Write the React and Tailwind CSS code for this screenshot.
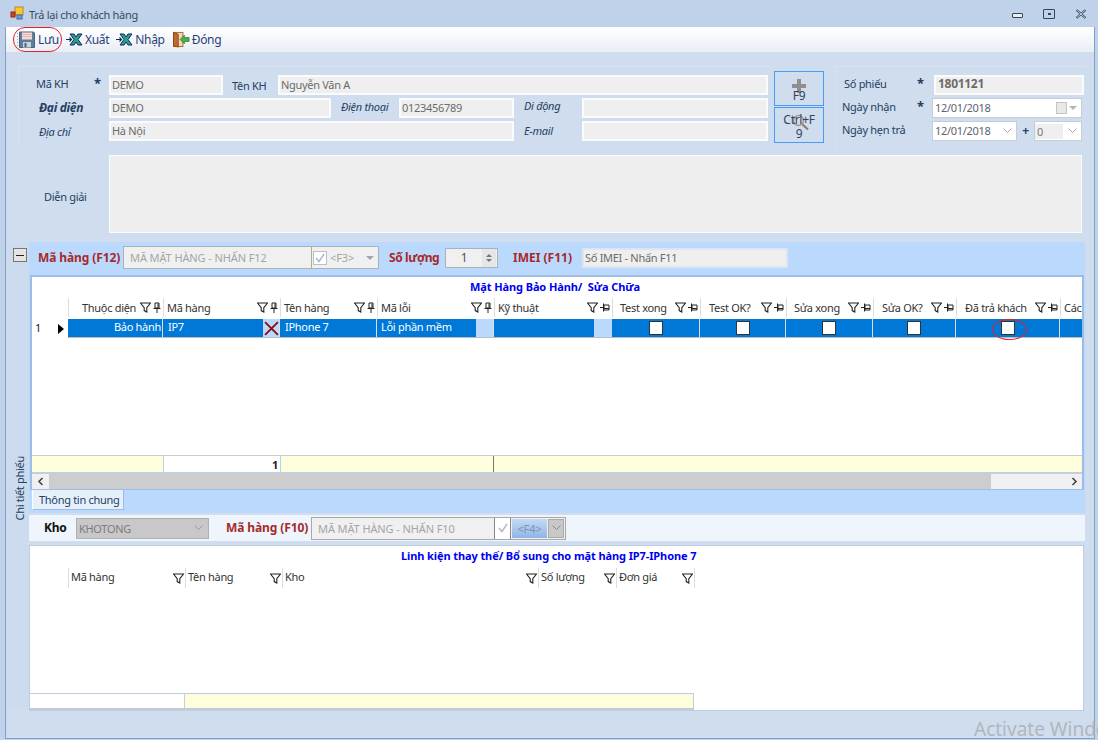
import React from "react";

const Filter = () => (
  <svg width="11" height="11" viewBox="0 0 11 11" className="shrink-0">
    <path d="M0.5 1h10L6.8 5.6v4.4L4.2 8.6V5.6z" fill="#fff" stroke="#222" strokeWidth="1.1" />
  </svg>
);

const PinV = () => (
  <svg width="8" height="11" viewBox="0 0 8 11" className="shrink-0">
    <path d="M2 1h4v5H2zM0.5 6.5h7M4 7v4M5 1.5v4" fill="none" stroke="#222" strokeWidth="1" />
  </svg>
);

const PinH = () => (
  <svg width="10" height="9" viewBox="0 0 10 9" className="shrink-0">
    <path d="M0 4.5h3M3.5 0.5v8M4 2h5v5H4zM4 5.5h5" fill="none" stroke="#222" strokeWidth="1" />
  </svg>
);

const WindowIcon = () => (
  <svg width="15" height="15" viewBox="0 0 15 15">
    <rect x="5" y="1" width="8" height="8" fill="#f5c834" stroke="#b88a20" />
    <rect x="1" y="6" width="4" height="5" fill="#d8402c" stroke="#8e2216" />
    <rect x="7" y="9" width="5" height="4" fill="#6b9ddc" stroke="#3d6aa8" />
  </svg>
);

const Floppy = () => (
  <svg width="16" height="17" viewBox="0 0 16 17">
    <path d="M0.5 1h14l1 1v14.500H0.500z" fill="#5f7d99" stroke="#4a647d" />
    <rect x="3" y="1.500" width="10" height="7" fill="#f3dcd8" />
    <path d="M3 3.500h10M3 5.500h10" stroke="#eeb5ad" />
    <rect x="4" y="11" width="8" height="5.500" fill="#c9d3dc" />
    <rect x="5.500" y="12" width="2" height="4" fill="#4a647d" />
  </svg>
);

const ExcelX = () => (
  <svg width="17" height="13" viewBox="0 0 17 13">
    <path d="M4 1h4l2 3 2-3h4l-4 5.500L16 12h-4l-2-3-2 3H4l4-5.500z" fill="#2f9c8f" stroke="#0c2f5a" strokeWidth="1" />
    <path d="M0 6.500h5M3.500 4.500l2 2-2 2" fill="none" stroke="#0c2f5a" strokeWidth="1.200" />
  </svg>
);

const Door = () => (
  <svg width="17" height="17" viewBox="0 0 18 17">
    <rect x="0.500" y="1" width="10" height="15" fill="#f0d9b8" stroke="#a8662a" />
    <path d="M0.500 1l5 2v13.500l-5-1.500z" fill="#c2692a" stroke="#8a4516" />
    <path d="M17 6.500h-5V4L7.500 8.500 12 13v-2.500h5z" fill="#4cb04a" stroke="#2c7a2c" strokeWidth="0.800" />
  </svg>
);

const Lookup = () => (
  <svg width="17" height="17" viewBox="0 0 17 17">
    <circle cx="6.500" cy="6.500" r="5" fill="#d9dfe6" stroke="#9a9a9a" strokeWidth="1.600" />
    <path d="M10.500 10.500l5.500 5" stroke="#8a7a68" strokeWidth="2" />
  </svg>
);

const Chevron = ({ color = "#a8a8a8" }) => (
  <svg width="9" height="6" viewBox="0 0 9 6">
    <path d="M0.500 0.500l4 4 4-4" fill="none" stroke={color} />
  </svg>
);

const Tick = ({ color = "#a9b8cc" }) => (
  <svg width="12" height="12" viewBox="0 0 12 12">
    <path d="M2 6l3 3.500L10 2" fill="none" stroke={color} strokeWidth="1.400" />
  </svg>
);

const Box = ({ className = "", children }) => (
  <div className={`h-full shrink-0 bg-[#efefef] border-2 border-[#fafbfd] text-[#6b6b6b] pl-[1px] pb-[2px] flex items-center ${className}`}>
    {children}
  </div>
);

const Row = ({ children }) => <div className="flex items-center h-[20px]">{children}</div>;

const Label = ({ className = "", children }) => (
  <div className={`shrink-0 text-[#24405f] ${className}`}>{children}</div>
);

const UPPER_COLS = [
  { name: "Thuộc diện", w: "w-[95px]", pl: "pl-[13px]", pin: "v" },
  { name: "Mã hàng", w: "w-[117px]", pl: "pl-[3px]", pin: "v" },
  { name: "Tên hàng", w: "w-[97px]", pl: "pl-[3px]", pin: "v" },
  { name: "Mã lỗi", w: "w-[117px]", pl: "pl-[3px]", pin: "v" },
  { name: "Kỹ thuật", w: "w-[118px]", pl: "pl-[3px]", pin: "h" },
  { name: "Test xong", w: "w-[88px]", pl: "pl-[7px]", pin: "h" },
  { name: "Test OK?", w: "w-[86px]", pl: "pl-[8px]", pin: "h" },
  { name: "Sửa xong", w: "w-[87px]", pl: "pl-[7px]", pin: "h" },
  { name: "Sửa OK?", w: "w-[83px]", pl: "pl-[8px]", pin: "h" },
  { name: "Đã trả khách", w: "w-[104px]", pl: "pl-[8px]", pin: "h" },
];

const LOWER_COLS = [
  { name: "Mã hàng", w: "w-[117px]" },
  { name: "Tên hàng", w: "w-[97px]" },
  { name: "Kho", w: "w-[256px]" },
  { name: "Số lượng", w: "w-[78px]" },
  { name: "Đơn giá", w: "w-[78px]" },
];

const CHECK_COLS = ["w-[88px]", "w-[86px]", "w-[87px]", "w-[83px]", "w-[104px]"];

function Check({ w }) {
  return (
    <div className={`${w} shrink-0 h-full border-r border-[#d8dfe8] flex items-center justify-center`}>
      <div className="w-[14px] h-[14px] bg-white border border-[#333]" />
    </div>
  );
}

export default function App() {
  return (
    <div className="relative w-[1098px] h-[740px] overflow-hidden bg-[#bfd2e9] font-['Noto_Sans','Liberation_Sans',sans-serif] text-[11px] tracking-[-0.3px] leading-none text-[#33445a]">
      {/* title bar */}
      <div className="h-[27px] flex items-center pl-[10px]">
        <WindowIcon />
        <span className="ml-[4px] mt-[2px] text-[#3a4a5e] text-[11px]">Trả lại cho khách hàng</span>
        <div className="ml-auto flex items-center gap-[20px] pr-[11px]">
          <div className="w-[11px] h-[5px] border border-[#33445a] rounded-[1px] bg-[#e9eff7] mt-[4px]" />
          <div className="w-[12px] h-[10px] border-[1.5px] border-[#33445a] rounded-[1px] flex items-center justify-center">
            <div className="w-[3px] h-[2px] bg-[#33445a]" />
          </div>
          <svg width="12" height="10" viewBox="0 0 12 10">
            <path d="M1.500 1l9 8M10.500 1l-9 8" stroke="#33445a" strokeWidth="2.200" />
            <path d="M1.500 1l9 8M10.500 1l-9 8" stroke="#e9eff7" strokeWidth="0.800" />
          </svg>
        </div>
      </div>

      {/* client area */}
      <div className="ml-[5px] w-[1090px] h-[712px] bg-[#d0ddef] border-x border-b border-[#7f9fc6]">
        {/* toolbar */}
        <div className="h-[25px] bg-gradient-to-b from-white to-[#e9eef5] flex items-center pl-[11px] text-[12px] text-[#2c3f78]">
          <div className="flex flex-col gap-[2px] mr-[1px]">
            <i className="w-[1px] h-[1px] bg-[#9fb2c9]" />
            <i className="w-[1px] h-[1px] bg-[#9fb2c9]" />
            <i className="w-[1px] h-[1px] bg-[#9fb2c9]" />
            <i className="w-[1px] h-[1px] bg-[#9fb2c9]" />
            <i className="w-[1px] h-[1px] bg-[#9fb2c9]" />
          </div>
          <Floppy />
          <span className="ml-[3px] mr-[7px]">Lưu</span>
          <ExcelX />
          <span className="ml-[2px] mr-[7px]">Xuất</span>
          <ExcelX />
          <span className="ml-[2px] mr-[8px]">Nhập</span>
          <Door />
          <span className="ml-[2px]">Đóng</span>
        </div>

        {/* header form */}
        <div className="h-[96px] flex pt-[14px]">
          <div className="ml-[12px] w-[752px] h-[82px] border-t border-l border-[#d8e3f1] pt-[8px] flex flex-col gap-[3px]">
            <Row>
              <Label className="ml-[17px] w-[58px] mb-[4px]">Mã KH</Label>
              <Label className="w-[15px] text-[13px] font-bold mb-[4px]">*</Label>
              <Box className="w-[114px]">DEMO</Box>
              <Label className="ml-[9px] w-[46px]">Tên KH</Label>
              <Box className="w-[490px]">Nguyễn Văn A</Box>
            </Row>
            <Row>
              <Label className="ml-[20px] w-[70px] font-bold italic text-[12px]">Đại diện</Label>
              <Box className="w-[222px]">DEMO</Box>
              <Label className="ml-[10px] w-[58px] italic mb-[4px]">Điện thoại</Label>
              <Box className="w-[115px]">0123456789</Box>
              <Label className="ml-[10px] w-[58px] italic mb-[5px]">Di động</Label>
              <Box className="w-[186px]" />
            </Row>
            <Row>
              <Label className="ml-[20px] w-[70px] italic">Địa chỉ</Label>
              <Box className="w-[405px]">Hà Nội</Box>
              <Label className="ml-[10px] w-[58px] italic mb-[2px]">E-mail</Label>
              <Box className="w-[186px]" />
            </Row>
          </div>

          <div className="ml-[4px] mt-[5px] flex flex-col gap-[1px]">
            <div className="relative w-[50px] h-[35px] border-[1.5px] border-[#4a9bf5] flex flex-col items-center justify-end pb-[3px]">
              <svg width="14" height="14" viewBox="0 0 14 14" className="mb-[-3px]">
                <path d="M5 0h4v5h5v4H9v5H5V9H0V5h5z" fill="#8f8f8f" />
              </svg>
              <span className="text-[#33445a] text-[12px]">F9</span>
            </div>
            <div className="relative w-[50px] h-[36px] border-[1.5px] border-[#4a9bf5] flex flex-col items-center justify-center gap-[2px] pt-[3px] text-[12px]">
              <div className="absolute left-[17px] top-[6px]">
                <Lookup />
              </div>
              <span className="relative">Ctrl+F</span>
              <span className="relative">9</span>
            </div>
          </div>

          <div className="ml-[11px] w-[252px] h-[82px] border-t border-l border-[#d8e3f1] pt-[8px] flex flex-col gap-[3px]">
            <Row>
              <Label className="ml-[8px] w-[73px] mb-[4px]">Số phiếu</Label>
              <Label className="w-[17px] text-[13px] font-bold mb-[4px]">*</Label>
              <Box className="w-[150px] font-bold text-[12px] pl-[2px]">1801121</Box>
            </Row>
            <Row>
              <Label className="ml-[6px] w-[75px] mb-[4px]">Ngày nhận</Label>
              <Label className="w-[15px] text-[13px] font-bold mb-[4px]">*</Label>
              <div className="w-[150px] h-full bg-white border border-[#c5cdd8] flex items-center pl-[2px] pb-[1px] text-[#5c6470]">
                12/01/2018
                <div className="ml-auto mr-[4px] flex items-center gap-[2px]">
                  <div className="w-[11px] h-[12px] bg-[#e8e8e8] border border-[#c4c4c4]" />
                  <div className="w-0 h-0 border-x-[4px] border-x-transparent border-t-[4px] border-t-[#b5b5b5]" />
                </div>
              </div>
            </Row>
            <Row>
              <Label className="ml-[6px] w-[90px] mb-[4px]">Ngày hẹn trả</Label>
              <div className="w-[85px] h-full bg-white border border-[#c5cdd8] flex items-center pl-[2px] pb-[1px] text-[#5c6470]">
                12/01/2018
                <div className="ml-auto mr-[4px]">
                  <Chevron />
                </div>
              </div>
              <Label className="w-[17px] text-center font-bold text-[12px]">+</Label>
              <div className="w-[48px] h-full bg-white border border-[#c5cdd8] flex items-center text-[#7a7a7a]">
                <div className="w-[28px] h-[15px] bg-[#efefef] pl-[2px] flex items-center">0</div>
                <div className="ml-auto mr-[4px]">
                  <Chevron />
                </div>
              </div>
            </Row>
          </div>
        </div>

        {/* dien giai */}
        <div className="h-[94px] flex pt-[7px]">
          <div className="w-[103px] shrink-0 flex items-center h-[78px] pl-[38px] pt-[4px] text-[#24405f]">Diễn giải</div>
          <div className="w-[973px] h-[78px] bg-[#eeeeee] border border-[#fafbfd]" />
        </div>

        {/* detail section */}
        <div className="flex h-[468px]">
          <div className="w-[23px] shrink-0 bg-[#ccdbee] flex flex-col items-center pt-[6px] pb-[190px] pl-[4px]">
            <div className="w-[14px] h-[14px] border border-[#777] bg-[#e5e5e5] flex items-center justify-center">
              <div className="w-[8px] h-[1px] bg-[#222]" />
            </div>
            <div className="mt-auto [writing-mode:vertical-rl] rotate-180 text-[#24405f] whitespace-nowrap">Chi tiết phiếu</div>
          </div>

          <div className="w-[1056px] shrink-0">
            <div className="h-[271px] bg-[#bbd9fd]">
              {/* upper filter */}
              <div className="h-[33px] flex items-center pb-[2px] text-[12px]">
                <span className="ml-[9px] w-[85px] font-bold text-[#a52a2a] tracking-[-0.1px]">Mã hàng (F12)</span>
                <div className="w-[256px] h-[23px] bg-[#f0f0f0] border border-[#a9b2bc] flex items-center text-[#a5a5a5] text-[11px] tracking-[-0.1px]">
                  <span className="pl-[6px] w-[187px] shrink-0">MÃ MẶT HÀNG - NHẤN F12</span>
                  <div className="w-[16px] h-[21px] border-l border-[#b9a97e] flex items-center justify-center">
                    <div className="w-[14px] h-[14px] bg-white border border-[#b8c0ca] flex items-center justify-center">
                      <Tick />
                    </div>
                  </div>
                  <span className="ml-[3px]">&lt;F3&gt;</span>
                  <div className="ml-auto mr-[4px] w-0 h-0 border-x-[4px] border-x-transparent border-t-[4px] border-t-[#a5a5a5]" />
                </div>
                <span className="ml-[10px] w-[56px] font-bold text-[#a52a2a] tracking-[-0.4px]">Số lượng</span>
                <div className="w-[53px] h-[20px] bg-[#f0f0f0] border border-[#a9b2bc] flex items-center text-[#555] text-[12px]">
                  <span className="w-[36px] text-center">1</span>
                  <div className="w-[14px] h-full flex flex-col justify-center items-center gap-[2px] bg-[#e6e6e6]">
                    <div className="w-0 h-0 border-x-[3px] border-x-transparent border-b-[3px] border-b-[#777]" />
                    <div className="w-0 h-0 border-x-[3px] border-x-transparent border-t-[3px] border-t-[#777]" />
                  </div>
                </div>
                <span className="ml-[15px] w-[69px] font-bold text-[#a52a2a] tracking-[0px]">IMEI (F11)</span>
                <div className="w-[206px] h-[20px] bg-[#efefef] border-2 border-[#dde5ee] flex items-center pl-[1px] pb-[1px] text-[#6b6b6b] text-[11px]">
                  Số IMEI - Nhấn F11
                </div>
              </div>

              {/* upper grid */}
              <div className="ml-[1px] w-[1054px] h-[215px] bg-white border-x-2 border-t-2 border-b border-[#9dbde8] flex flex-col overflow-hidden">
                <div className="h-[21px] pt-[4px] pl-[438px] text-[#0000f0] font-bold whitespace-nowrap tracking-[-0.1px]">Mặt Hàng Bảo Hành/&nbsp; Sửa Chữa</div>
                <div className="h-[21px] flex items-center pb-[2px] whitespace-nowrap">
                  <div className="w-[36px] shrink-0" />
                  {UPPER_COLS.map((c) => (
                    <div key={c.name} className={`${c.w} ${c.pl} shrink-0 h-full flex items-center border-l border-[#dddddd] pr-[2px] text-[#333]`}>
                      <span>{c.name}</span>
                      <div className="ml-auto flex items-center gap-[2px]">
                        <Filter />
                        {c.pin === "v" ? <PinV /> : <PinH />}
                      </div>
                    </div>
                  ))}
                  <div className="h-full flex items-center pl-[3px] border-l border-[#dddddd] text-[#333]">Các</div>
                </div>
                <div className="h-[19px] flex items-center whitespace-nowrap shrink-0">
                  <div className="w-[36px] h-full shrink-0 flex items-center pl-[3px] pb-[2px] text-[#222] relative">
                    1
                    <div className="absolute left-[26px] top-[5px] w-0 h-0 border-y-[5px] border-y-transparent border-l-[6px] border-l-black" />
                  </div>
                  <div className="flex-1 h-full flex bg-[#0078d7] text-white border-b border-[#b9bfc6] min-w-0">
                    <div className="w-[95px] shrink-0 h-full border-r border-[#d8dfe8] flex items-center justify-end pr-[1px] pb-[3px]">Bảo hành</div>
                    <div className="w-[100px] shrink-0 h-full flex items-center pl-[5px] pb-[3px]">IP7</div>
                    <div className="w-[17px] shrink-0 h-full bg-[#bbd9fd] border-r border-[#d8dfe8] flex items-center justify-center">
                      <svg width="15" height="15" viewBox="0 0 14 14">
                        <path d="M1 1l12 12M13 1L1 13" stroke="#8a1010" strokeWidth="1.800" />
                      </svg>
                    </div>
                    <div className="w-[97px] shrink-0 h-full border-r border-[#d8dfe8] flex items-center pl-[5px] pb-[3px]">IPhone 7</div>
                    <div className="w-[99px] shrink-0 h-full flex items-center pl-[4px] pb-[3px]">Lỗi phần mềm</div>
                    <div className="w-[18px] shrink-0 h-full bg-[#bbd9fd] border-r border-[#d8dfe8]" />
                    <div className="w-[100px] shrink-0 h-full" />
                    <div className="w-[18px] shrink-0 h-full bg-[#bbd9fd]" />
                    {CHECK_COLS.map((w) => (
                      <Check key={w} w={w} />
                    ))}
                  </div>
                </div>
                <div className="flex-1" />
                <div className="h-[17px] shrink-0 flex bg-[#fefedd] border-t border-[#c3cfdd]">
                  <div className="w-[132px] shrink-0 border-r border-[#c3cfdd]" />
                  <div className="w-[117px] shrink-0 bg-white border-r border-[#c3cfdd] flex items-center justify-end pr-[2px] font-bold text-[#222]">1</div>
                  <div className="w-[213px] shrink-0 border-r border-[#777]" />
                </div>
                <div className="h-[17px] shrink-0 flex items-center bg-[#f0f0f0] border-t-2 border-[#c3cfdd]">
                  <div className="w-[17px] shrink-0 flex justify-center">
                    <svg width="7" height="9" viewBox="0 0 7 9">
                      <path d="M5.500 1L2 4.500 5.500 8" fill="none" stroke="#444" strokeWidth="1.600" />
                    </svg>
                  </div>
                  <div className="w-[942px] shrink-0 h-full bg-[#cdcdcd]" />
                  <div className="ml-auto mr-[4px]">
                    <svg width="7" height="9" viewBox="0 0 7 9">
                      <path d="M1.500 1L5 4.500 1.500 8" fill="none" stroke="#444" strokeWidth="1.600" />
                    </svg>
                  </div>
                </div>
              </div>

              {/* tab strip */}
              <div className="ml-[3px] w-[92px] h-[20px] bg-[#e6f0fb] border border-t-0 border-[#9dbbe0] border-l-white flex items-center pl-[6px] whitespace-nowrap text-[#24405f]">
                Thông tin chung
              </div>
            </div>

            {/* lower filter */}
            <div className="mt-[2px] h-[26px] bg-[#eef5fc] flex items-center text-[12px]">
              <span className="ml-[15px] w-[32px] font-bold text-[#111]">Kho</span>
              <div className="w-[133px] h-[21px] bg-[#c8c8c8] border border-[#b0b0b0] flex items-center pl-[2px] text-[11px] text-[#7d7d7d]">
                KHOTONG
                <div className="ml-auto mr-[5px]">
                  <Chevron color="#9a9a9a" />
                </div>
              </div>
              <span className="ml-[17px] w-[85px] font-bold text-[#a52a2a] tracking-[-0.1px]">Mã hàng (F10)</span>
              <div className="w-[255px] h-[23px] bg-[#f0f0f0] border border-[#a9a9a9] flex items-center text-[#a5a5a5] text-[11px] tracking-[-0.1px]">
                <span className="pl-[6px] w-[182px] shrink-0">MÃ MẶT HÀNG - NHẤN F10</span>
                <div className="w-[17px] h-[21px] border-x border-[#888] bg-white flex items-center justify-center">
                  <Tick color="#b9b9b9" />
                </div>
                <div className="ml-[1px] w-[35px] h-[19px] bg-gradient-to-b from-[#c4daf5] to-[#8fb5e6] flex items-center justify-center text-[#7f93ad]">&lt;F4&gt;</div>
                <div className="ml-[1px] w-[16px] h-[19px] bg-[#c8c8c8] border border-[#aaa] flex items-center justify-center">
                  <Chevron color="#8a8a8a" />
                </div>
              </div>
            </div>

            {/* lower grid */}
            <div className="mt-[4px] w-[1055px] h-[166px] bg-white border border-[#bfcde0] flex flex-col">
              <div className="h-[22px] pt-[4px] pl-[371px] text-[#0000f0] font-bold whitespace-nowrap tracking-[-0.1px]">Linh kiện thay thế/ Bổ sung cho mặt hàng IP7-IPhone 7</div>
              <div className="h-[20px] flex items-center">
                <div className="w-[38px] shrink-0" />
                {LOWER_COLS.map((c) => (
                  <div key={c.name} className={`${c.w} shrink-0 h-full flex items-center border-l border-[#dddddd] pl-[2px] pr-[1px] text-[#333]`}>
                    <span className="mb-[3px]">{c.name}</span>
                    <div className="ml-auto">
                      <Filter />
                    </div>
                  </div>
                ))}
                <div className="h-full border-l border-[#dddddd]" />
              </div>
              <div className="flex-1" />
              <div className="w-[664px] h-[17px] flex border-t border-[#bfcde0] border-b-2 border-b-[#c5cbd6]">
                <div className="w-[155px] bg-white border-r border-[#c3cfdd]" />
                <div className="flex-1 bg-[#fefedd] border-r border-[#c3cfdd]" />
              </div>
            </div>
          </div>
        </div>
      </div>

      {/* red annotation marks */}
      <div className="absolute left-[13px] top-[27px] w-[49px] h-[25px] border border-[#e3202a] rounded-[12px]" />
      <div className="absolute left-[992px] top-[319px] w-[35px] h-[21px] border border-[#e3202a] rounded-[50%]" />

      {/* os watermark */}
      <div className="absolute left-[974px] top-[720px] text-[19px] tracking-[0px] whitespace-nowrap text-[#b2b6bb]">Activate Windows</div>
    </div>
  );
}
